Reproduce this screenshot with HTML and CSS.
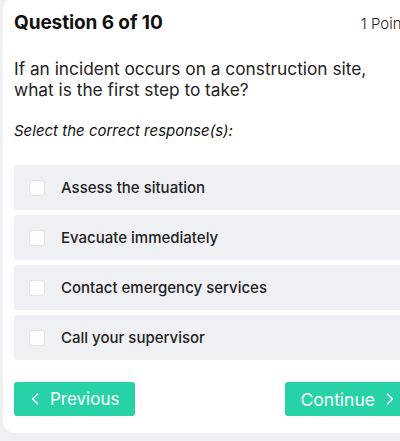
FILE: index.html
```html
<!DOCTYPE html>
<html>
<head>
<meta charset="utf-8">
<link rel="stylesheet" href="styles.css">
</head>
<body>
<div class="card">
  <div class="head">
    <h2 class="title">Question 6 of 10</h2>
    <span class="points">1 Point</span>
  </div>
  <p class="question">If an incident occurs on a construction site, what is the first step to take?</p>
  <p class="hint">Select the correct response(s):</p>
  <div class="options">
    <label class="option"><span class="box"></span><span class="label">Assess the situation</span></label>
    <label class="option"><span class="box"></span><span class="label">Evacuate immediately</span></label>
    <label class="option"><span class="box"></span><span class="label">Contact emergency services</span></label>
    <label class="option"><span class="box"></span><span class="label">Call your supervisor</span></label>
  </div>
  <div class="nav">
    <button class="btn"><svg class="chev" viewBox="0 0 10 16" width="8" height="14"><path d="M8 2 L2 8 L8 14" fill="none" stroke="#fff" stroke-width="2" stroke-linecap="round" stroke-linejoin="round"/></svg>Previous</button>
    <button class="btn next">Continue<svg class="chev" viewBox="0 0 10 16" width="8" height="14"><path d="M2 2 L8 8 L2 14" fill="none" stroke="#fff" stroke-width="2" stroke-linecap="round" stroke-linejoin="round"/></svg></button>
  </div>
</div>
</body>
</html>
```
FILE: styles.css
```css
html, body {
  margin: 0;
  padding: 0;
  overflow: hidden;
  background: #eff0f4;
}
body {
  font-family: Inter, "Noto Sans", sans-serif;
  color: #111;
  width: 400px;
  height: 441px;
}
.card {
  box-sizing: border-box;
  width: 414px;
  margin-left: 3px;
  margin-top: -2px;
  background: #fff;
  border-radius: 12px;
  padding: 11px 11px 17px 11px;
}
.head {
  display: flex;
  justify-content: space-between;
  align-items: baseline;
}
.title {
  margin: 0;
  font-size: 19px;
  font-weight: 700;
  line-height: 28px;
  letter-spacing: -0.1px;
}
.points {
  font-size: 15px;
  font-weight: 300;
  color: #222;
}
.question {
  margin: 21px 0 0 0;
  max-width: 370px;
  font-size: 17.3px;
  line-height: 21px;
  font-weight: 400;
  color: #222;
}
.hint {
  margin: 21px 0 0 0;
  font-size: 15px;
  line-height: 20px;
  font-style: italic;
  color: #111;
}
.options {
  display: flex;
  flex-direction: column;
  gap: 5px;
  margin-top: 24px;
}
.option {
  display: flex;
  align-items: center;
  height: 45px;
  background: #eff0f4;
  border-radius: 3px;
  padding-left: 15px;
}
.box {
  width: 16px;
  height: 16px;
  box-sizing: border-box;
  background: #fdfdfe;
  border: 1px solid #e2e3e8;
  border-radius: 3px;
  margin-right: 16px;
}
.label {
  font-size: 15px;
  font-weight: 500;
  color: #222;
}
.nav {
  display: flex;
  justify-content: space-between;
  margin-top: 22px;
}
.btn {
  display: flex;
  align-items: center;
  gap: 11px;
  height: 34px;
  border: none;
  border-radius: 3px;
  background: #27d3a6;
  color: #fff;
  font-family: inherit;
  font-size: 17px;
  font-weight: 400;
  padding: 0 16px 0 17px;
}
.btn.next {
  padding: 0 10px 0 16px;
  font-size: 17.5px;
  margin-right: 2px;
}
.chev {
  display: block;
}
```
